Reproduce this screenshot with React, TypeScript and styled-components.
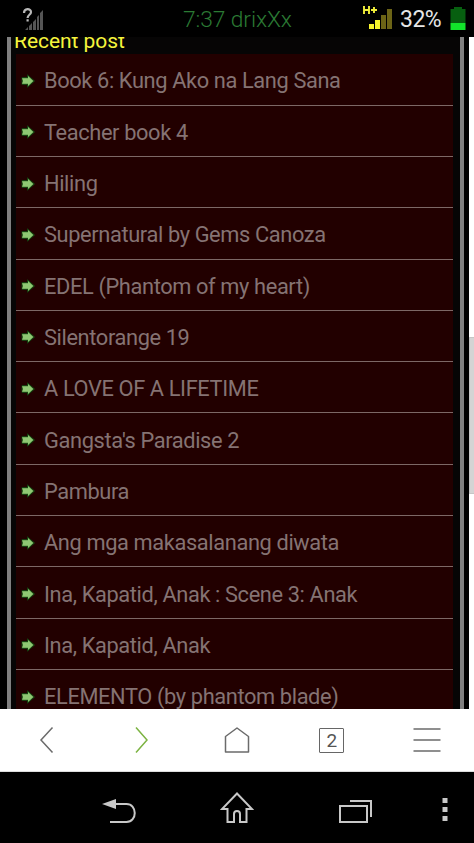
import React from "react";
import styled, { createGlobalStyle } from "styled-components";

const GlobalStyle = createGlobalStyle`
  * { box-sizing: border-box; }
  html, body { margin: 0; background: #000; overflow: hidden; }
  body { font-family: Roboto, "Liberation Sans", sans-serif; }
  svg { display: block; flex: none; }
`;

const Screen = styled.div`
  width: 474px;
  height: 843px;
  display: flex;
  flex-direction: column;
  background: #000;
  overflow: hidden;
`;

const StatusBar = styled.header`
  flex: none;
  height: 37px;
  display: grid;
  grid-template-columns: 183px 1fr auto;
  align-items: center;
  padding-right: 8px;
`;

const SignalSlot = styled.div`
  padding-left: 22px;
`;

const Clock = styled.div`
  font-size: 22.8px;
  font-weight: 300;
  line-height: 37px;
  letter-spacing: -0.1px;
  color: #2b7a34;
  padding-top: 1px;
  white-space: nowrap;
`;

const StatusRight = styled.div`
  display: flex;
  align-items: center;
`;

const Percent = styled.span`
  width: 50px;
  margin-top: 1px;
  font-size: 23px;
  line-height: 34px;
  letter-spacing: -0.5px;
  color: #e6e6e6;
`;

const Viewport = styled.main`
  flex: none;
  height: 672px;
  display: flex;
  padding-left: 7px;
  overflow: hidden;
`;

const Frame = styled.section`
  width: 457px;
  border: solid #808080;
  border-width: 0 4px;
  padding: 0 7px 0 5px;
  background: #060505;
  overflow: hidden;
`;

const Heading = styled.h2`
  height: 17.2px;
  margin: 0 0 0 -2px;
  display: flex;
  align-items: flex-end;
  font-size: 21px;
  font-weight: 400;
  line-height: 26px;
  letter-spacing: -0.05px;
  color: #f5f53c;
  white-space: nowrap;
`;

const PostList = styled.ul`
  list-style: none;
  margin: 0;
  padding: 0;
  width: 437px;
`;

const PostRow = styled.li`
  height: 51.33px;
  display: flex;
  align-items: center;
  gap: 7px;
  padding: 3px 0 0 5px;
  background: #220000;
  border-bottom: 1px solid #7d6866;
  font-size: 21.8px;
  letter-spacing: -0.37px;
  color: #857373;
  white-space: nowrap;
`;

const Scrollbar = styled.div`
  width: 5px;
  margin-left: 5px;
  padding-top: 300px;
  background: #fff;
`;

const Thumb = styled.div`
  height: 157px;
  background: #d4d4d4;
  border: 1px solid #c6c6c6;
  border-right: 0;
`;

const BrowserBar = styled.nav`
  flex: none;
  height: 63px;
  display: grid;
  grid-template-columns: repeat(5, 1fr);
  align-items: center;
  justify-items: center;
  background: #fff;
  border-bottom: 1px solid #ddd;
`;

const BarButton = styled.button<{ $accent?: boolean }>`
  border: 0;
  padding: 0;
  background: none;
  color: ${(p) => (p.$accent ? "#7cb342" : "#6b6b6b")};
`;

const TabCount = styled.span`
  display: block;
  width: 25px;
  height: 25px;
  border: 1.5px solid #666;
  border-radius: 1px;
  font: 19px/24px Roboto, sans-serif;
  color: #555;
`;

const SystemBar = styled.nav`
  flex: none;
  height: 71px;
  display: flex;
  align-items: center;
  padding: 1px 0 0 102px;
`;

const SystemButton = styled.button<{ $width: number }>`
  width: ${(p) => p.$width}px;
  border: 0;
  padding: 0;
  background: none;
  color: #c8c8c8;
`;

const posts = [
  "Book 6: Kung Ako na Lang Sana",
  "Teacher book 4",
  "Hiling",
  "Supernatural by Gems Canoza",
  "EDEL (Phantom of my heart)",
  "Silentorange 19",
  "A LOVE OF A LIFETIME",
  "Gangsta's Paradise 2",
  "Pambura",
  "Ang mga makasalanang diwata",
  "Ina, Kapatid, Anak : Scene 3: Anak",
  "Ina, Kapatid, Anak",
  "ELEMENTO (by phantom blade)",
];

const ArrowIcon = () => (
  <svg width="16" height="16" viewBox="0 0 16 16">
    <path d="M1 4.500h5.500V1.800L13.500 8l-7 6.200v-2.700H1z" fill="#27641f" stroke="#163d10" strokeWidth="1" strokeLinejoin="round" />
    <path d="M1 5.200h6V3L12.300 8 7 13v-2.200H1l1-2.800z" fill="#8fc873" />
  </svg>
);

const NoSignalIcon = () => (
  <svg width="22" height="24" viewBox="0 0 22 24">
    <g fill="#555">
      <path d="M3 23l3-3v3zM7 19l3-3v7H7zM11 15l3-3v11h-3zM15 10l2-2v15h-2zM18 6l3-3v20h-3z" />
    </g>
    <path d="M2 6c0-5 7-5 7-1 0 3-3.400 2.500-3.400 6M5.600 12.300v2.200" fill="none" stroke="#b8b8b8" strokeWidth="2.200" />
  </svg>
);

const MobileSignalIcon = () => (
  <svg width="37" height="26" viewBox="0 0 37 26">
    <path d="M1 0v8M6 0v8M1 4h5M8 4h6M11 1v6" fill="none" stroke="#f0ee3a" strokeWidth="1.900" />
    <path d="M6 18h5v5H6zM12 14h5v9h-5z" fill="#f7f52d" />
    <path d="M18 9h5v14h-5zM24 3h5v20h-5z" fill="#6c6416" />
  </svg>
);

const BatteryIcon = () => (
  <svg width="16" height="24" viewBox="0 0 16 24">
    <path d="M4 0h8v2h3.500v14H.5V2H4z" fill="#075f10" />
    <path d="M.5 16h15v7H.5z" fill="#12e52b" />
  </svg>
);

const line = { fill: "none", stroke: "currentColor", strokeWidth: 1.5 };

const App: React.FC = () => (
  <>
    <GlobalStyle />
    <Screen>
      <StatusBar>
        <SignalSlot><NoSignalIcon /></SignalSlot>
        <Clock>7:37 drixXx</Clock>
        <StatusRight>
          <MobileSignalIcon />
          <Percent>32%</Percent>
          <BatteryIcon />
        </StatusRight>
      </StatusBar>
      <Viewport>
        <Frame>
          <Heading>Recent post</Heading>
          <PostList>
            {posts.map((title) => (
              <PostRow key={title}><ArrowIcon />{title}</PostRow>
            ))}
          </PostList>
        </Frame>
        <Scrollbar><Thumb /></Scrollbar>
      </Viewport>
      <BrowserBar>
        <BarButton aria-label="Back">
          <svg width="28" height="28" viewBox="0 0 28 28"><path d="M19.500 1.500L8 14l11.500 12.500" {...line} /></svg>
        </BarButton>
        <BarButton aria-label="Forward" $accent>
          <svg width="28" height="28" viewBox="0 0 28 28"><path d="M8 1.500L19 14 8 26.500" {...line} /></svg>
        </BarButton>
        <BarButton aria-label="Home">
          <svg width="28" height="28" viewBox="0 0 28 28"><path d="M2.500 10.500L14 2l11.500 8.500V26h-23z" {...line} strokeLinejoin="round" /></svg>
        </BarButton>
        <BarButton aria-label="Tabs"><TabCount>2</TabCount></BarButton>
        <BarButton aria-label="Menu">
          <svg width="28" height="28" viewBox="0 0 28 28"><path d="M.5 3h27M.5 14h27M.5 25h27" {...line} /></svg>
        </BarButton>
      </BrowserBar>
      <SystemBar>
        <SystemButton $width={118} aria-label="Back">
          <svg width="36" height="34" viewBox="0 0 36 34">
            <path d="M12 13h12.500c11 0 11 18 0 18H8" fill="none" stroke="currentColor" strokeWidth="2" />
            <path d="M0 13L14 8v10z" fill="currentColor" />
          </svg>
        </SystemButton>
        <SystemButton $width={118} aria-label="Home">
          <svg width="34" height="34" viewBox="0 0 34 34">
            <path d="M17 2.500L2 18h5.500v13H14v-8c0-4 6-4 6 0v8h6.500V18H32z" fill="none" stroke="currentColor" strokeWidth="2" />
          </svg>
        </SystemButton>
        <SystemButton $width={104} aria-label="Recent apps">
          <svg width="36" height="34" viewBox="0 0 36 34">
            <path d="M2 15h27v16H2zM12 10h21V26" fill="none" stroke="currentColor" strokeWidth="2" />
          </svg>
        </SystemButton>
        <SystemButton $width={6} aria-label="More">
          <svg width="6" height="34" viewBox="0 0 6 34">
            <path d="M.5 7h5v5h-5zM.5 16h5v5h-5zM.5 25h5v5h-5z" fill="currentColor" />
          </svg>
        </SystemButton>
      </SystemBar>
    </Screen>
  </>
);

export default App;
